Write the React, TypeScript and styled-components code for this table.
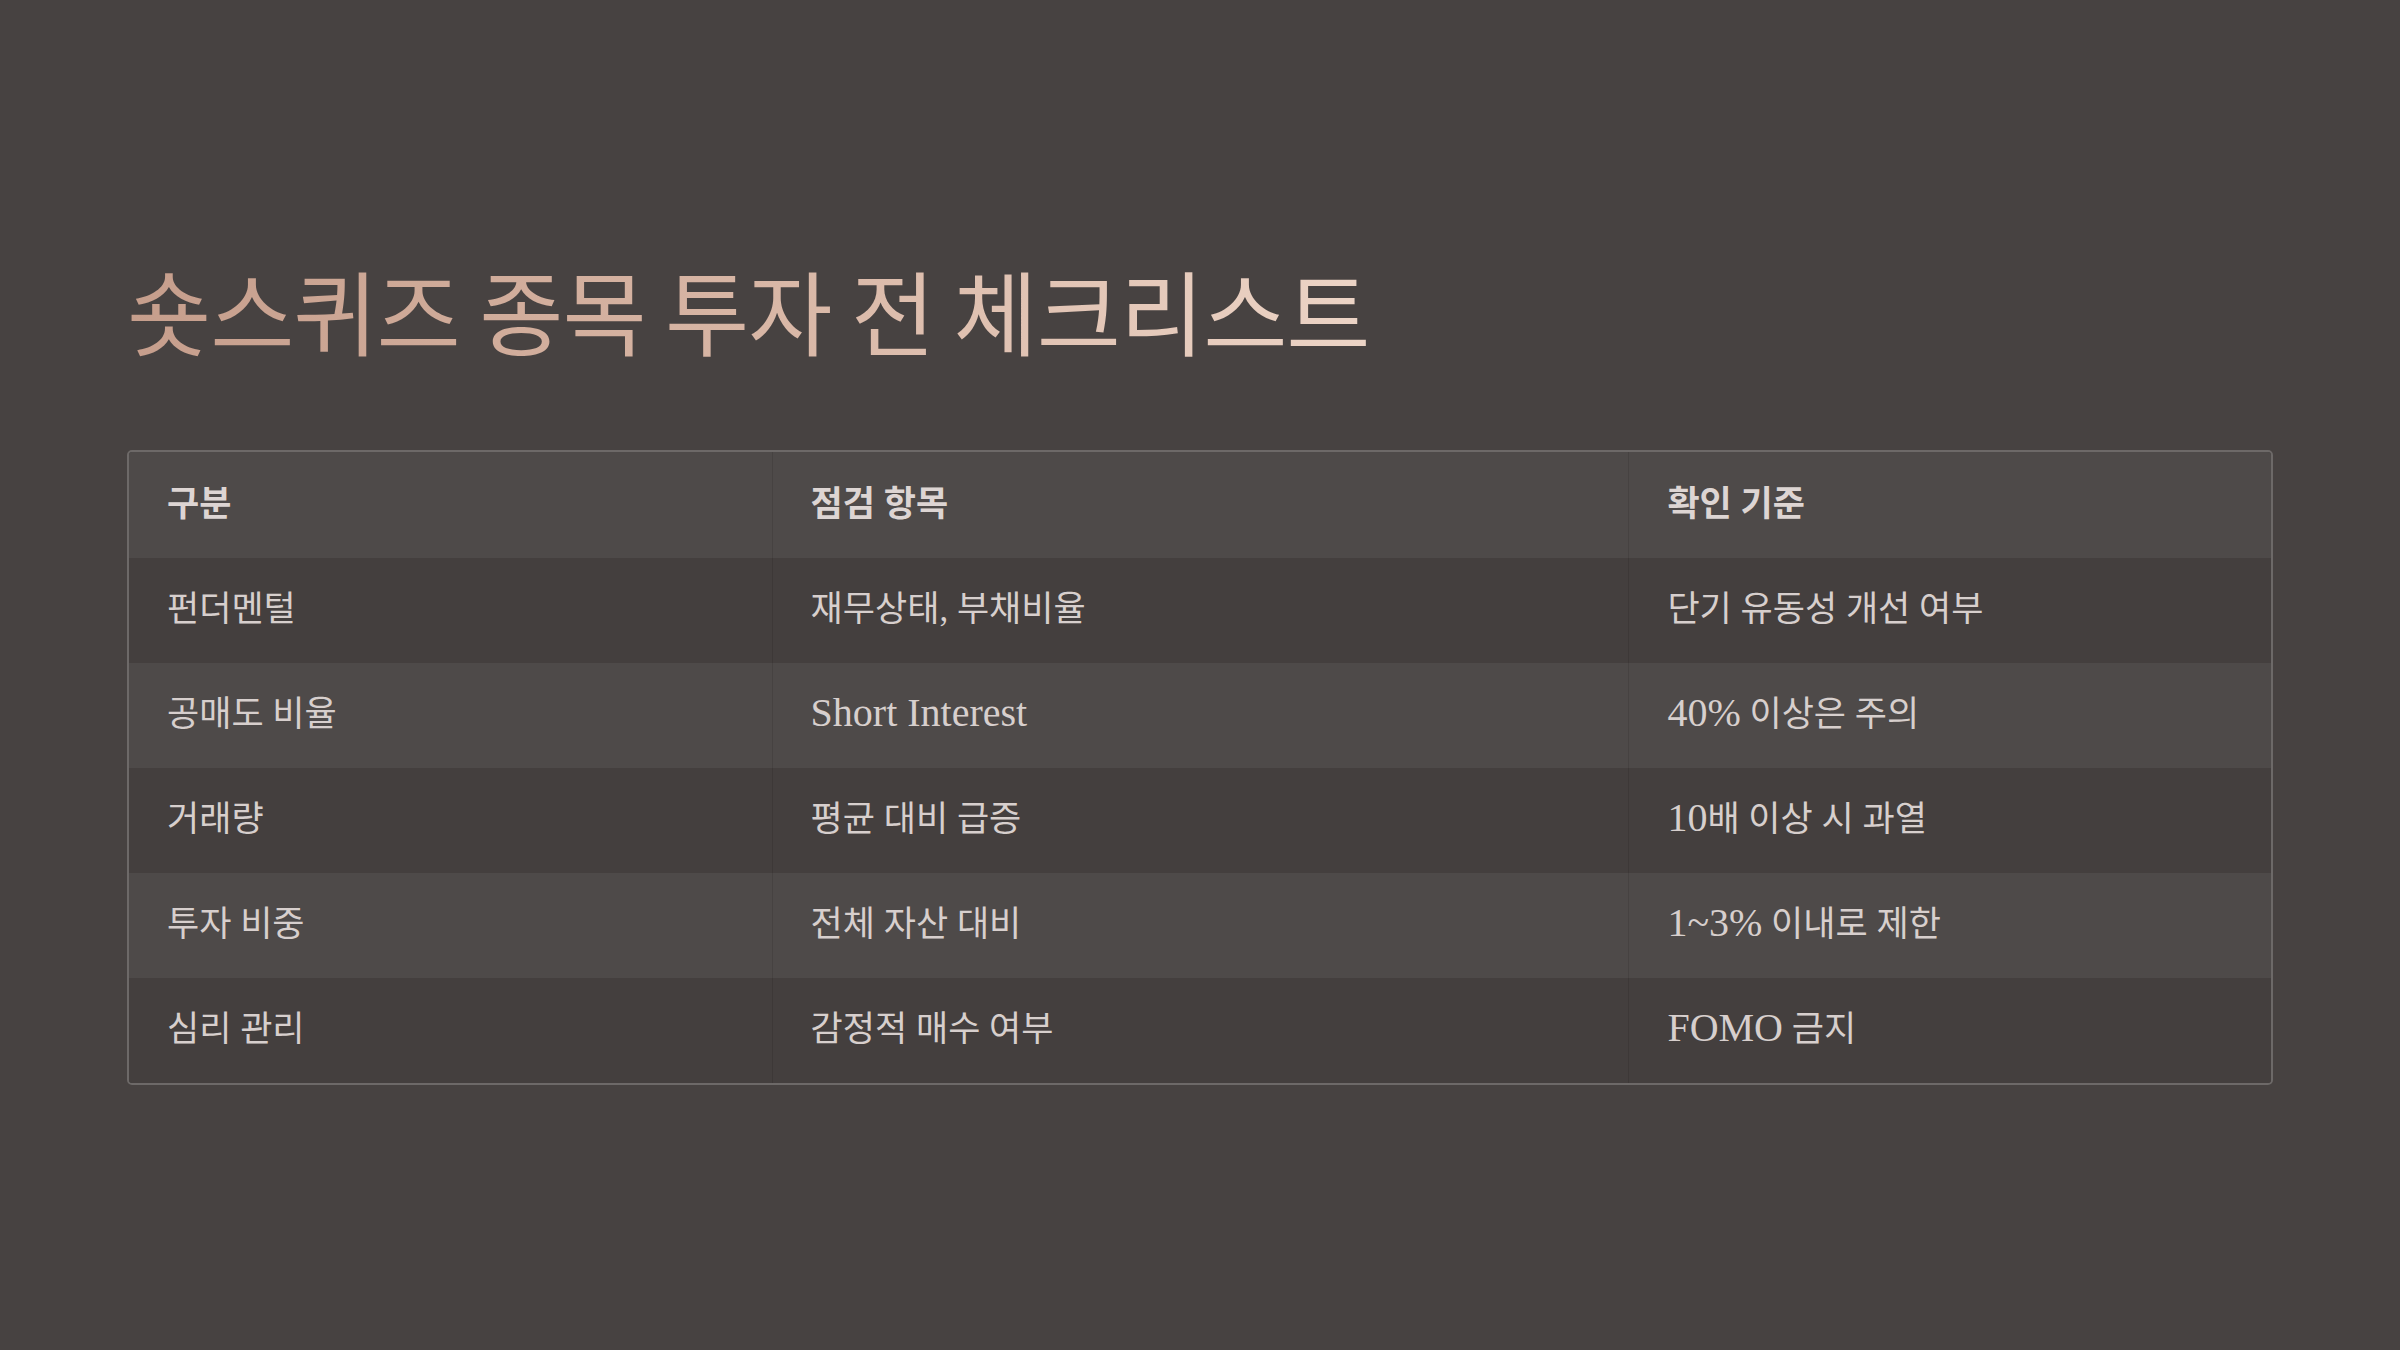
import React from "react";
import styled, { createGlobalStyle } from "styled-components";

const GlobalStyle = createGlobalStyle`
  html, body {
    margin: 0;
    padding: 0;
    background: #474241;
  }
  #root {
    min-height: 100vh;
  }
`;

const Page = styled.main`
  box-sizing: border-box;
  min-height: 100vh;
  padding: 0 127px 10px;
  display: flex;
  flex-direction: column;
  justify-content: center;
  background: #474241;
  font-family: "Liberation Serif", "Noto Sans CJK KR", serif;
`;

const Title = styled.h1`
  margin: 0 0 86px;
  font-family: "Noto Sans CJK KR", sans-serif;
  font-weight: 400;
  font-size: 91.5px;
  line-height: 1.2;
  letter-spacing: -1px;
  align-self: flex-start;
  background: linear-gradient(90deg, #c69e8c 0%, #d8b6a5 50%, #ecd4c6 100%);
  -webkit-background-clip: text;
  background-clip: text;
  color: transparent;
`;

const Table = styled.table`
  width: 100%;
  border-collapse: separate;
  border-spacing: 0;
  border: 2px solid #6d6968;
  border-radius: 5px;
  overflow: hidden;
  table-layout: fixed;
`;

const HeadCell = styled.th<{ $w: string }>`
  box-sizing: border-box;
  width: ${(p) => p.$w};
  text-align: left;
  padding: 26px 38px 26px;
  background: #4e4a49;
  color: #ddd5d3;
  font-family: "Liberation Serif", "Noto Sans CJK KR", serif;
  font-weight: 700;
  font-size: 35px;
  line-height: 54px;
  border-left: 1px solid #464241;
  &:first-child {
    border-left: none;
  }
`;

const Row = styled.tr<{ $dark: boolean }>`
  background: ${(p) => (p.$dark ? "#443f3e" : "#4e4a49")};
`;

const Cell = styled.td`
  box-sizing: border-box;
  padding: 25px 38px 26px;
  color: #d7cfcd;
  font-size: 35px;
  line-height: 54px;
  font-weight: 400;
  border-left: 1px solid rgba(0, 0, 0, 0.1);
  &:first-child {
    border-left: none;
  }
`;

const Latin = styled.span`
  font-family: "Liberation Serif", serif;
  font-size: 40px;
  line-height: 1;
`;

function Mixed({ text }: { text: string }) {
  const parts = text.split(/([A-Za-z0-9%~]+(?: [A-Za-z0-9%~]+)*)/);
  return (
    <>
      {parts.map((p, i) =>
        /[A-Za-z0-9]/.test(p) ? <Latin key={i}>{p}</Latin> : <React.Fragment key={i}>{p}</React.Fragment>
      )}
    </>
  );
}

const rows: [string, string, string][] = [
  ["펀더멘털", "재무상태, 부채비율", "단기 유동성 개선 여부"],
  ["공매도 비율", "Short Interest", "40% 이상은 주의"],
  ["거래량", "평균 대비 급증", "10배 이상 시 과열"],
  ["투자 비중", "전체 자산 대비", "1~3% 이내로 제한"],
  ["심리 관리", "감정적 매수 여부", "FOMO 금지"],
];

export default function App() {
  return (
    <>
      <GlobalStyle />
      <Page>
        <Title>숏스퀴즈 종목 투자 전 체크리스트</Title>
        <Table>
          <thead>
            <tr>
              <HeadCell $w="30%">구분</HeadCell>
              <HeadCell $w="40%">점검 항목</HeadCell>
              <HeadCell $w="30%">확인 기준</HeadCell>
            </tr>
          </thead>
          <tbody>
            {rows.map((r, i) => (
              <Row key={i} $dark={i % 2 === 0}>
                {r.map((c, j) => (
                  <Cell key={j}>
                    <Mixed text={c} />
                  </Cell>
                ))}
              </Row>
            ))}
          </tbody>
        </Table>
      </Page>
    </>
  );
}
